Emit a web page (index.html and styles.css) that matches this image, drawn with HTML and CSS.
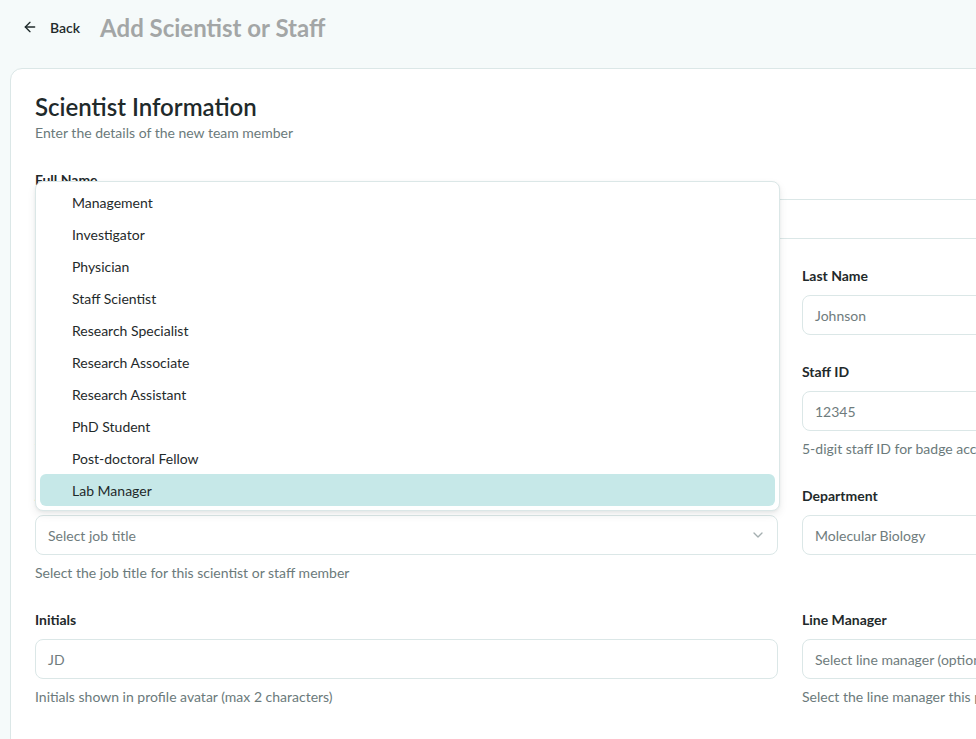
FILE: index.html
```html
<!DOCTYPE html>
<html lang="en">
<head>
<meta charset="utf-8">
<title>Add Scientist or Staff</title>
<link rel="stylesheet" href="styles.css">
</head>
<body>
<header class="topbar">
  <button class="back-btn" type="button">
    <svg class="back-icon" width="16" height="16" viewBox="0 0 24 24" fill="none" stroke="currentColor" stroke-width="2" stroke-linecap="round" stroke-linejoin="round"><path d="m12 19-7-7 7-7"/><path d="M19 12H5"/></svg>
    <span>Back</span>
  </button>
  <h1 class="page-title">Add Scientist or Staff</h1>
</header>

<main class="card">
  <h2 class="card-title">Scientist Information</h2>
  <p class="card-desc">Enter the details of the new team member</p>

  <form class="form">
    <div class="field">
      <label class="label">Full Name</label>
      <div class="input"><span class="ph">Jane Johnson</span></div>
    </div>

    <div class="grid">
      <div class="field">
        <label class="label">First Name</label>
        <div class="input"><span class="ph">Jane</span></div>
      </div>
      <div class="field">
        <label class="label">Last Name</label>
        <div class="input"><span class="ph">Johnson</span></div>
      </div>

      <div class="field">
        <label class="label">Email</label>
        <div class="input"><span class="ph">jane.johnson@example.org</span></div>
        <p class="help">Work email address</p>
      </div>
      <div class="field">
        <label class="label">Staff ID</label>
        <div class="input"><span class="ph">12345</span></div>
        <p class="help">5-digit staff ID for badge access</p>
      </div>

      <div class="field">
        <label class="label">Job Title</label>
        <div class="select-wrap">
          <div class="input select"><span class="ph">Select job title</span>
            <svg class="chev" width="16" height="16" viewBox="0 0 24 24" fill="none" stroke="currentColor" stroke-width="2" stroke-linecap="round" stroke-linejoin="round"><path d="m6 9 6 6 6-6"/></svg>
          </div>
          <ul class="menu">
            <li class="opt">Management</li>
            <li class="opt">Investigator</li>
            <li class="opt">Physician</li>
            <li class="opt">Staff Scientist</li>
            <li class="opt">Research Specialist</li>
            <li class="opt">Research Associate</li>
            <li class="opt">Research Assistant</li>
            <li class="opt">PhD Student</li>
            <li class="opt">Post-doctoral Fellow</li>
            <li class="opt active">Lab Manager</li>
          </ul>
        </div>
        <p class="help">Select the job title for this scientist or staff member</p>
      </div>
      <div class="field">
        <label class="label">Department</label>
        <div class="input"><span class="ph">Molecular Biology</span></div>
      </div>

      <div class="field">
        <label class="label">Initials</label>
        <div class="input"><span class="ph">JD</span></div>
        <p class="help">Initials shown in profile avatar (max 2 characters)</p>
      </div>
      <div class="field">
        <label class="label">Line Manager</label>
        <div class="input select"><span class="ph">Select line manager (optional)</span>
          <svg class="chev" width="16" height="16" viewBox="0 0 24 24" fill="none" stroke="currentColor" stroke-width="2" stroke-linecap="round" stroke-linejoin="round"><path d="m6 9 6 6 6-6"/></svg>
        </div>
        <p class="help">Select the line manager this person reports to</p>
      </div>
    </div>

    <div class="actions">
      <button class="btn" type="button">Cancel</button>
      <button class="btn primary" type="button">Add Scientist</button>
    </div>
  </form>
</main>
</body>
</html>
```

FILE: styles.css
```css
html, body {
  margin: 0;
  padding: 0;
  overflow: hidden;
}
body {
  background: #f5fafa;
  font-family: Lato, "Noto Sans", sans-serif;
  color: #1f2a2b;
  width: 976px;
  height: 739px;
}
.topbar {
  display: flex;
  align-items: center;
  height: 54px;
  padding-left: 22px;
  gap: 20px;
}
.back-btn {
  display: flex;
  align-items: center;
  gap: 12px;
  background: none;
  border: 0;
  padding: 0;
  font-family: inherit;
  font-size: 14px;
  font-weight: 600;
  color: #1f2a2b;
}
.back-icon {
  width: 16px;
  height: 16px;
}
.page-title {
  margin: 0;
  font-size: 24px;
  font-weight: 700;
  color: #a3a6a6;
}
.card {
  display: block;
  margin: 14px 0 0 10px;
  width: 1510px;
  padding: 24px;
  background: #ffffff;
  border: 1px solid #dbe7e7;
  border-radius: 12px;
}
.card-title {
  margin: 0;
  font-size: 24px;
  line-height: 28px;
  font-weight: 600;
  color: #1f2a2b;
}
.card-desc {
  margin: 2px 0 0;
  font-size: 14px;
  line-height: 20px;
  color: #6b7a7b;
}
.form {
  margin-top: 27px;
  display: flex;
  flex-direction: column;
  gap: 27px;
}
.grid {
  display: grid;
  grid-template-columns: 1fr 1fr;
  column-gap: 24px;
  row-gap: 27px;
  align-items: start;
}
.field {
  display: flex;
  flex-direction: column;
}
.label {
  font-size: 14px;
  line-height: 20px;
  font-weight: 700;
  color: #1f2a2b;
  margin-bottom: 9px;
}
.input {
  box-sizing: border-box;
  height: 40px;
  display: flex;
  align-items: center;
  padding: 0 12px;
  border: 1px solid #dbe7e7;
  border-radius: 8px;
  background: #fff;
  font-size: 14px;
}
.ph {
  color: #6f7c7d;
  white-space: nowrap;
}
.select {
  justify-content: space-between;
}
.chev {
  color: #a5afb0;
  flex: none;
  width: 16px;
  height: 16px;
  margin-right: -1px;
}
.help {
  margin: 8px 0 0;
  font-size: 14px;
  line-height: 20px;
  color: #6b7a7b;
}
.select-wrap {
  position: relative;
}
.menu {
  position: absolute;
  left: 0;
  right: -2px;
  bottom: calc(100% + 4px);
  margin: 0;
  padding: 4px;
  list-style: none;
  background: #fff;
  border: 1px solid #dbe7e7;
  border-radius: 8px;
  box-shadow: 0 4px 8px rgba(20, 40, 40, 0.08), 0 1px 3px rgba(20, 40, 40, 0.06);
  z-index: 10;
}
.opt {
  height: 32px;
  display: flex;
  align-items: center;
  padding-left: 32px;
  font-size: 14px;
  color: #1f2a2b;
  border-radius: 6px;
}
.opt.active {
  background: #c6e8e8;
}
.actions {
  display: flex;
  justify-content: flex-end;
  gap: 12px;
  margin-top: 12px;
}
.btn {
  height: 40px;
  padding: 0 16px;
  border: 1px solid #dbe7e7;
  border-radius: 8px;
  background: #fff;
  font-family: inherit;
  font-size: 14px;
  font-weight: 600;
  color: #1f2a2b;
}
.btn.primary {
  background: #2a9d9d;
  border-color: #2a9d9d;
  color: #fff;
}
```
